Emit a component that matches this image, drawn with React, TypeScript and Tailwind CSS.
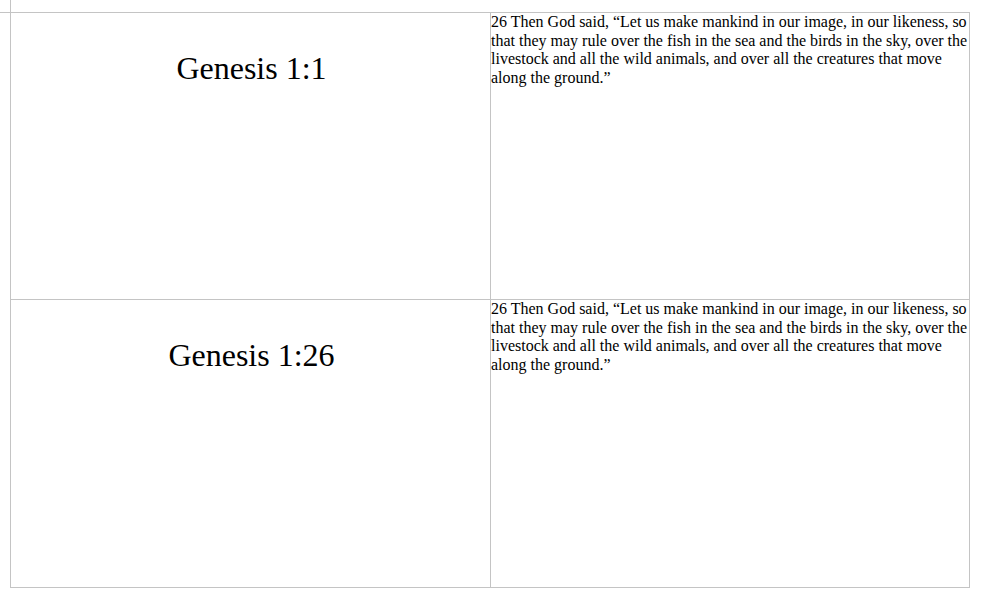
const verse =
  "26 Then God said, \u201cLet us make mankind in our image, in our likeness, so that they may rule over the fish in the sea and the birds in the sky, over the livestock and all the wild animals, and over all the creatures that move along the ground.\u201d";

const rows = [
  { ref: "Genesis 1:1", text: verse, h: "h-[287px]" },
  { ref: "Genesis 1:26", text: verse, h: "h-[288px]" },
];

export default function App() {
  return (
    <div className="min-h-screen bg-white text-black font-['Liberation_Serif',serif]">
      {/* top strip: lines run out to the page edge */}
      <div className="flex w-[970px] h-[13px]">
        <div className="w-[10px] border-b border-[#c4c4c4]" />
        <div className="flex-1 border-l border-b border-[#c4c4c4]" />
      </div>

      <div className="ml-[10px] w-[960px] border-l border-[#c4c4c4]">
        {rows.map((r) => (
          <div key={r.ref} className={`flex border-b border-[#c4c4c4] ${r.h}`}>
            <div className="w-[480px] border-r border-[#c4c4c4] pt-[37px] pl-[2px] text-center">
              <div className="text-[32px] leading-[37px]">{r.ref}</div>
            </div>
            <div className="flex-1 border-r border-[#c4c4c4] text-[16px] leading-[18.5px]">
              {r.text}
            </div>
          </div>
        ))}
      </div>
    </div>
  );
}
